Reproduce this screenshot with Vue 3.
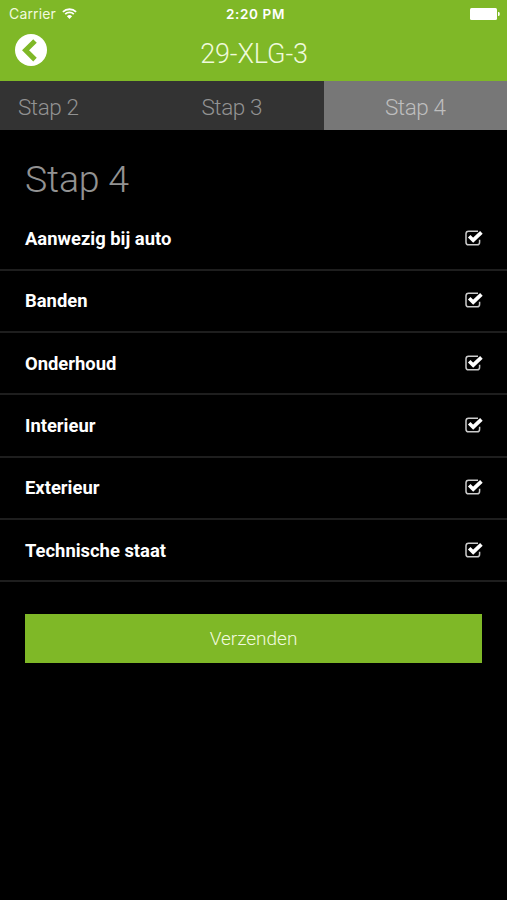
<script setup>
import { ref } from 'vue'

const plate = ref('29-XLG-3')
const activeStep = ref(4)
const steps = [2, 3, 4]

const sections = ref([
  { name: 'Aanwezig bij auto', done: true },
  { name: 'Banden', done: true },
  { name: 'Onderhoud', done: true },
  { name: 'Interieur', done: true },
  { name: 'Exterieur', done: true },
  { name: 'Technische staat', done: true },
])
</script>

<template>
  <div class="app">
    <header class="header">
      <div class="status-bar">
        <div class="carrier">
          <span class="carrier-name">Carrier</span>
          <svg class="wifi" viewBox="0 0 15 11">
            <path d="M0.9 3.9A9.6 9.6 0 0 1 14.1 3.9" />
            <path d="M3.2 6.2A6.2 6.2 0 0 1 11.8 6.2" />
            <path class="wifi-dot" d="M7.5 11L4.9 8.3A3.7 3.7 0 0 1 10.1 8.3Z" />
          </svg>
        </div>
        <span class="time">2:20 PM</span>
        <div class="battery-wrap">
          <svg class="battery" viewBox="0 0 30 12">
            <rect x="0" y="0" width="27" height="12" rx="1.5" />
            <path d="M28 4h.6a1.2 2 0 0 1 0 4H28z" />
          </svg>
        </div>
      </div>
      <div class="title-bar">
        <button class="back" aria-label="Terug">
          <svg viewBox="0 0 32 32">
            <circle cx="16" cy="16" r="16" />
            <path d="M20 7L10.6 16.3L20 25.6" />
          </svg>
        </button>
        <h1 class="title">{{ plate }}</h1>
      </div>
    </header>

    <nav class="tabs">
      <button
        v-for="step in steps"
        :key="step"
        class="tab"
        :class="{ active: step === activeStep }"
        @click="activeStep = step"
      >
        Stap {{ step }}
      </button>
    </nav>

    <main>
      <h2 class="heading">Stap {{ activeStep }}</h2>
      <ul class="list">
        <li v-for="section in sections" :key="section.name" class="row">
          <span>{{ section.name }}</span>
          <svg v-if="section.done" class="check" viewBox="0 0 18 16">
            <path class="box" d="M13 1.2H3.6A2.6 2.6 0 0 0 1 3.8V12.2A2.6 2.6 0 0 0 3.6 14.8H12A2.6 2.6 0 0 0 14.6 12.2V9.8" />
            <path class="tick" d="M4.2 6.3L8.2 10.2L16.4 2.4" />
          </svg>
        </li>
      </ul>
      <button class="submit">Verzenden</button>
    </main>
  </div>
</template>

<style>
body {
  background: #000;
}
</style>

<style scoped>
.app {
  min-height: 900px;
  background: #000;
  color: #fff;
  font-family: Roboto, sans-serif;
  overflow: hidden;
}

button {
  border: none;
  margin: 0;
  padding: 0;
  font-family: inherit;
  cursor: pointer;
}

.header {
  height: 81px;
  background: #7fb827;
}

.status-bar {
  display: grid;
  grid-template-columns: 1fr auto 1fr;
  align-items: center;
  height: 27px;
  padding: 0 7px 0 9px;
  font-family: Inter, sans-serif;
  font-size: 14px;
}

.carrier {
  display: flex;
  align-items: center;
  gap: 6px;
}

.carrier-name {
  color: #f1fadf;
  letter-spacing: 0.15px;
}

.wifi {
  width: 15px;
  height: 11px;
  margin-top: -1px;
  fill: none;
  stroke: #fff;
  stroke-width: 1.8;
}

.wifi .wifi-dot {
  fill: #fff;
  stroke: none;
}

.time {
  font-size: 13.5px;
  font-weight: 600;
  letter-spacing: 0.65px;
  padding-left: 2px;
}

.battery-wrap {
  display: flex;
  justify-content: flex-end;
}

.battery {
  width: 30px;
  height: 12px;
  fill: #fff;
}

.title-bar {
  display: grid;
  grid-template-columns: 48px 1fr 48px;
  align-items: center;
  height: 52px;
}

.back {
  width: 32px;
  height: 32px;
  margin: -6px 0 0 15px;
  background: none;
}

.back svg {
  display: block;
  fill: #fff;
}

.back path {
  fill: none;
  stroke: #7fb827;
  stroke-width: 5;
}

.title {
  margin: 0;
  padding: 1px 0 0 1px;
  text-align: center;
  font-size: 27px;
  font-weight: 300;
  letter-spacing: -0.15px;
  color: #effadb;
}

.tabs {
  display: flex;
  justify-content: flex-end;
  height: 49px;
  background: #333;
}

.tab {
  flex: 0 0 183.5px;
  padding-top: 3px;
  background: #333;
  color: #929292;
  font-size: 22.5px;
  font-weight: 300;
  letter-spacing: -0.4px;
}

.tab.active {
  background: #777;
  color: #bebebe;
}

.heading {
  margin: 0;
  padding: 26px 25px 0;
  height: 52.5px;
  line-height: 46px;
  font-size: 37.5px;
  font-weight: 300;
  letter-spacing: -0.2px;
  color: #929292;
}

.list {
  margin: 0;
  padding: 0;
  list-style: none;
}

.row {
  display: flex;
  align-items: center;
  justify-content: space-between;
  box-sizing: border-box;
  height: 62.3px;
  padding: 0 24px 0 25px;
  border-bottom: 2px solid #1e1e1e;
  font-size: 18.4px;
  font-weight: 700;
}

.check {
  width: 18px;
  height: 16px;
  margin-top: -1px;
  fill: none;
}

.box {
  stroke: #ccc;
  stroke-width: 1.5;
}

.tick {
  stroke: #fff;
  stroke-width: 3.7;
}

.submit {
  display: block;
  width: calc(100% - 50px);
  height: 49px;
  margin: 31.5px 25px 0;
  background: #7fb827;
  color: #f1fadf;
  font-size: 19px;
  font-weight: 300;
}
</style>
